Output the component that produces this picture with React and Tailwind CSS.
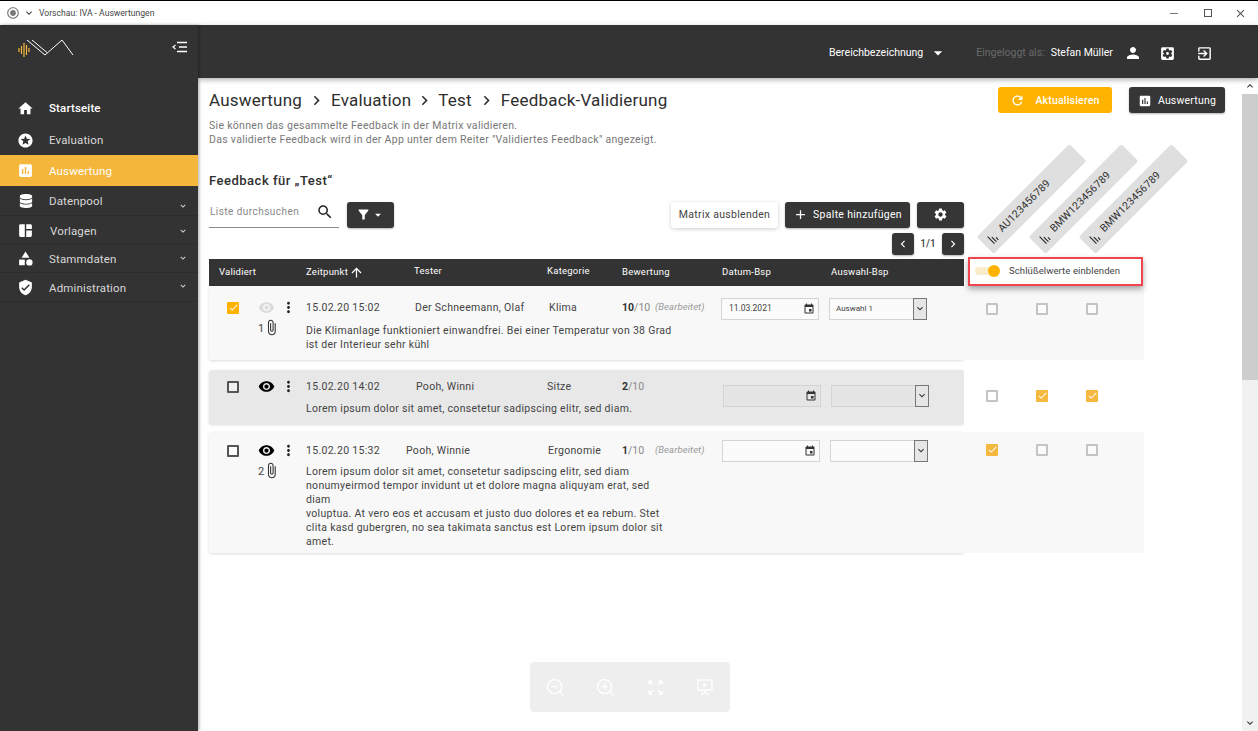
import { useState } from 'react';
import { ZoomIn, ZoomOut } from 'lucide-react';
import { FaDatabase } from 'react-icons/fa';
import {
  MdHome, MdStars, MdAssessment, MdSpaceDashboard, MdCategory, MdVerifiedUser,
  MdExpandMore, MdPerson, MdSettingsApplications, MdExitToApp, MdRefresh, MdSearch,
  MdFilterAlt, MdArrowDropDown, MdAdd, MdSettings, MdChevronLeft, MdChevronRight,
  MdArrowUpward, MdCheck, MdVisibility, MdMoreVert, MdAttachFile, MdEvent, MdKeyboardArrowUp,
  MdKeyboardArrowDown, MdZoomOutMap, MdClose, MdRadioButtonChecked, MdSort,
} from 'react-icons/md';

const navItems = [
  { label: 'Startseite', icon: MdHome, h: 'h-[32px]', text: 'text-white font-medium' },
  { label: 'Evaluation', icon: MdStars, h: 'h-[31px] pt-[1px]', text: 'text-[#d8d8d8]' },
  { label: 'Auswertung', icon: MdAssessment, h: 'h-[31px]', text: 'text-white', active: true },
  { label: 'Datenpool', icon: FaDatabase, h: 'h-[30px]', text: 'text-[#d8d8d8]', more: true, arrow: 'mt-[10px]', small: true },
  { label: 'Vorlagen', icon: MdSpaceDashboard, h: 'h-[29px] pt-[1px]', text: 'text-[#d8d8d8] pl-[1px]', more: true },
  { label: 'Stammdaten', icon: MdCategory, h: 'h-[28px]', text: 'text-[#d8d8d8]', more: true, arrow: '-mt-[2px]' },
  { label: 'Administration', icon: MdVerifiedUser, h: 'h-[29px]', text: 'text-[#d8d8d8] pt-[1px]', more: true, arrow: '-mt-[2px]' },
];

const feedback = [
  {
    id: 1, bg: 'bg-[#f8f8f8]', height: 'h-[74px]', gap: 'mb-[10px]', pt: 'pt-[15px]', shown: false, checked: true, count: '1',
    date: '15.02.20 15:02', tester: 'Der Schneemann, Olaf', testerW: 'pl-[9px] w-[143px]', cat: 'Klima', catW: 'w-[73px]',
    score: '10', edited: true, dateVal: '11.03.2021', selVal: 'Auswahl 1', inputs: 'ml-0 mt-[2px]', descMt: 'mt-[9px]',
    text: ['Die Klimanlage funktioniert einwandfrei. Bei einer Temperatur von 38 Grad', 'ist der Interieur sehr kühl'],
    matrix: [false, false, false], matrixStyle: 'pt-[17px] bg-[#f8f8f8]',
  },
  {
    id: 2, bg: 'bg-[#e8e8e8]', height: 'h-[54px]', gap: 'mb-[8px]', pt: 'pt-[10px]', shown: true, checked: false,
    date: '15.02.20 14:02', tester: 'Pooh, Winni', testerW: 'pl-[10px] w-[141px]', cat: 'Sitze', catW: 'w-[75px]',
    score: '2', edited: false, dateVal: '', selVal: '', inputs: 'ml-[2px] mt-[18px]', dark: true, descMt: 'mt-[8px]',
    text: ['Lorem ipsum dolor sit amet, consetetur sadipscing elitr, sed diam.'],
    matrix: [false, true, true], matrixStyle: 'pt-[20px] bg-white',
  },
  {
    id: 3, bg: 'bg-[#f8f8f8]', height: 'h-[121px]', gap: '', pt: 'pt-[12px]', shown: true, checked: false, count: '2',
    date: '15.02.20 15:32', tester: 'Pooh, Winnie', testerW: 'w-[142px] pl-0', cat: 'Ergonomie', catW: 'w-[74px]',
    score: '1', edited: true, dateVal: '', selVal: '', inputs: 'ml-[1px]', descMt: 'mt-[7px]',
    text: [
      'Lorem ipsum dolor sit amet, consetetur sadipscing elitr, sed diam',
      'nonumyeirmod tempor invidunt ut et dolore magna aliquyam erat, sed',
      'diam',
      'voluptua. At vero eos et accusam et justo duo dolores et ea rebum. Stet',
      'clita kasd gubergren, no sea takimata sanctus est Lorem ipsum dolor sit',
      'amet.',
    ],
    matrix: [true, false, false], matrixStyle: 'pt-[12px] bg-[#f8f8f8]',
  },
];

const matrixLabels = [
  { label: 'AU123456789', pos: 'left-[2px]' },
  { label: 'BMW123456789', pos: 'left-[54px]' },
  { label: 'BMW123456789', pos: 'left-[104px]' },
];

function Checkbox({ checked, muted }) {
  if (checked) {
    return (
      <span className={`flex h-[12px] w-[12px] items-center justify-center rounded-[1px] ${muted ? 'bg-[#f5b93f]' : 'bg-[#ffb300]'}`}>
        <MdCheck className="h-[11px] w-[11px] text-white" />
      </span>
    );
  }
  return <span className={`block h-[12px] w-[12px] rounded-[1px] border-2 bg-white/40 ${muted ? 'border-[#c4c4c4]' : 'border-[#555555]'}`} />;
}

function DarkButton({ children, className }) {
  return (
    <button className={`flex items-center justify-center rounded-[3px] bg-[#363636] text-white shadow-[0_1px_2px_rgba(0,0,0,0.3)] ${className}`}>
      {children}
    </button>
  );
}

function FeedbackRow({ row }) {
  return (
    <div className={`flex w-[755px] rounded-[3px] shadow-[0_1px_3px_rgba(0,0,0,0.14)] ${row.bg} ${row.height} ${row.gap} ${row.pt}`}>
      <div className="flex w-[97px] shrink-0 flex-col">
        <div className="flex h-[14px] items-center">
          <span className="ml-[18px]"><Checkbox checked={row.checked} /></span>
          <MdVisibility className={`ml-[19px] h-[17px] w-[17px] ${row.shown ? 'text-black' : 'text-[#dcdcdc]'}`} />
          <MdMoreVert className="ml-[5px] h-[17px] w-[17px] text-[#222222]" />
        </div>
        {row.count && (
          <div className="ml-[49px] mt-[3px] flex items-center text-[11px] text-[#444444]">
            <span className="pt-[3px]">{row.count}</span>
            <MdAttachFile className="-ml-[1px] h-[17px] w-[17px] text-[#333333]" />
          </div>
        )}
      </div>
      <div className="min-w-0 flex-1">
        <div className="flex h-[14px] items-center text-[10.5px] tracking-[0.3px] text-[#444444]">
          <span className="w-[100px] shrink-0">{row.date}</span>
          <span className={`shrink-0 ${row.testerW}`}>{row.tester}</span>
          <span className={`shrink-0 ${row.catW}`}>{row.cat}</span>
          <span className="w-[33px] shrink-0 tracking-normal text-[#888888]"><b className="font-bold text-[#333333]">{row.score}</b>/10</span>
          <span className="w-[66px] shrink-0 whitespace-nowrap text-[9.5px] italic tracking-[0.1px] text-[#9a9a9a]">{row.edited ? '(Bearbeitet)' : ''}</span>
          <div className={`flex shrink-0 items-center gap-[10px] tracking-normal ${row.inputs}`}>
            <div className={`flex h-[22px] w-[98px] items-center border border-[#d4d4d4] pl-[7px] pr-[3px] text-[8.5px] text-[#444444] ${row.dark ? 'bg-[#e5e5e5]' : 'bg-[#fbfbfb]'}`}>
              {row.dateVal}
              <MdEvent className="ml-auto h-[12px] w-[12px] text-[#333333]" />
            </div>
            <div className={`flex h-[22px] w-[98px] items-center border border-[#d4d4d4] pl-[6px] text-[8px] text-[#444444] ${row.dark ? 'bg-[#e5e5e5]' : 'bg-[#fbfbfb]'}`}>
              {row.selVal}
              <span className="-mr-[1px] ml-auto flex h-[22px] w-[14px] items-center justify-center border border-[#777777] bg-[#e6e6e6]">
                <MdKeyboardArrowDown className="h-[13px] w-[13px] text-[#333333]" />
              </span>
            </div>
          </div>
        </div>
        <div className={`whitespace-nowrap text-[10.5px] leading-[14px] tracking-[0.3px] text-[#444444] ${row.descMt}`}>
          {row.text.map((line, i) => <div key={i}>{line}</div>)}
        </div>
      </div>
    </div>
  );
}

function MatrixCells({ row }) {
  return (
    <div className={`flex ${row.height} ${row.gap} ${row.matrixStyle}`}>
      {row.matrix.map((on, i) => (
        <div key={i} className={`flex h-[12px] w-[50px] justify-center ${i === 0 ? 'ml-[3px]' : ''}`}>
          <Checkbox checked={on} muted />
        </div>
      ))}
    </div>
  );
}

export default function App() {
  const [search, setSearch] = useState('');

  return (
    <div className="flex h-[731px] w-[1258px] flex-col overflow-hidden bg-white font-['Roboto',sans-serif]">
      {/* window title bar */}
      <div className="flex h-[25px] shrink-0 items-center border-t border-black bg-white pl-[6px] text-[8.6px] text-[#444444]">
        <MdRadioButtonChecked className="h-[14px] w-[14px] text-[#777777]" />
        <MdExpandMore className="ml-[3px] h-[12px] w-[12px]" />
        <span className="ml-[4px]">Vorschau: IVA - Auswertungen</span>
        <div className="ml-auto flex items-center pr-[11px] text-[#555555]">
          <span className="block h-[1px] w-[8px] bg-[#777777]" />
          <span className="ml-[26px] block h-[8px] w-[8px] border border-[#555555]" />
          <MdClose className="ml-[22px] h-[13px] w-[13px]" />
        </div>
      </div>

      <div className="flex min-h-0 flex-1">
        {/* sidebar */}
        <aside className="relative z-20 w-[198px] shrink-0 bg-[#333333] shadow-[1px_0_3px_rgba(0,0,0,0.35)]">
          <div className="flex h-[67px] items-start justify-between pl-[17px] pr-[11px] pt-[14px]">
            <svg width="58" height="19" viewBox="0 0 58 19" fill="none">
              <path d="M2 9v4M4.5 7v8M7 4v14M9.5 6v10M12 9v4" stroke="#f5b93f" strokeWidth="1.2" />
              <path d="M10 1l18 15L45 1l11 15M15 1l15 12.5" stroke="#ffffff" strokeWidth="1" />
            </svg>
            <svg width="15" height="12" viewBox="0 0 15 12" className="mt-[2px]" fill="none" stroke="#ffffff">
              <path d="M5 1.5h10M7 6h8M5 10.5h10" strokeWidth="1.6" />
              <path d="M3.5 4L1 6l2.5 2" strokeWidth="1.2" />
            </svg>
          </div>
          <nav>
            {navItems.map((item) => (
              <div key={item.label} className={`flex items-center pl-[17px] ${item.h} ${item.active ? 'bg-[#f5b63c]' : ''} ${item.more ? 'border-b border-[#2d2d2d]' : ''}`}>
                <span className="flex w-[17px] shrink-0 justify-center">
                  <item.icon className={`text-white ${item.small ? 'h-[14px] w-[14px]' : 'h-[17px] w-[17px]'}`} />
                </span>
                <span className={`ml-[15px] mt-[2px] text-[11.5px] tracking-[0.15px] ${item.text}`}>{item.label}</span>
                {item.more && <MdExpandMore className={`ml-auto mr-[10px] h-[10px] w-[10px] text-[#dddddd] ${item.arrow || ''}`} />}
              </div>
            ))}
          </nav>
        </aside>

        <div className="flex min-w-0 flex-1 flex-col">
          {/* top header */}
          <header className="relative z-10 flex h-[53px] shrink-0 items-center bg-[#333333] pl-[631px] pt-[3px] text-[10.5px] shadow-[0_2px_5px_rgba(0,0,0,0.3)]">
            <span className="text-white">Bereichbezeichnung</span>
            <MdArrowDropDown className="ml-[5px] h-[20px] w-[20px] text-white" />
            <span className="ml-[28px] text-[#6a6a6a]">Eingeloggt als:</span>
            <span className="ml-[6px] text-white">Stefan Müller</span>
            <MdPerson className="ml-[11px] h-[18px] w-[18px] text-white" />
            <MdSettingsApplications className="ml-[17px] h-[17px] w-[17px] text-white" />
            <MdExitToApp className="ml-[20px] h-[17px] w-[17px] text-white" />
          </header>

          <div className="flex min-h-0 flex-1">
            {/* main scroll area */}
            <main className="relative min-w-0 flex-1 pl-[11px]">
              <div className="flex h-[41px] items-start justify-between pt-[9px] pr-[17px]">
                <div className="flex items-center pt-[1px] text-[17px] tracking-[0.2px] text-[#2e2e2e]">
                  <span>Auswertung</span>
                  <MdChevronRight className="mx-[5px] h-[19px] w-[19px]" />
                  <span>Evaluation</span>
                  <MdChevronRight className="mx-[4px] h-[19px] w-[19px]" />
                  <span>Test</span>
                  <MdChevronRight className="mx-[5px] h-[19px] w-[19px]" />
                  <span>Feedback-Validierung</span>
                </div>
                <div className="flex gap-[17px]">
                  <button className="flex h-[26px] w-[114px] items-center justify-center gap-[10px] rounded-[3px] bg-[#ffb300] pt-[1px] text-[10.5px] font-medium tracking-[0.2px] text-white">
                    <MdRefresh className="h-[15px] w-[15px]" />
                    Aktualisieren
                  </button>
                  <DarkButton className="h-[26px] w-[96px] gap-[6px] pt-[1px] text-[10.5px] tracking-[0.2px]">
                    <MdAssessment className="h-[14px] w-[14px]" />
                    Auswertung
                  </DarkButton>
                </div>
              </div>

              <p className="text-[10.5px] leading-[14px] tracking-[0.3px] text-[#777777]">
                Sie können das gesammelte Feedback in der Matrix validieren.<br />
                Das validierte Feedback wird in der App unter dem Reiter "Validiertes Feedback" angezeigt.
              </p>

              <h2 className="mt-[24px] text-[13px] font-medium tracking-[0.5px] text-[#2e2e2e]">Feedback für „Test“</h2>

              <div className="mt-[11px] flex w-[755px]">
                <div className="flex h-[26px] w-[130px] items-center justify-between border-b border-[#8a8a8a] pb-[5px]">
                  <input
                    value={search}
                    onChange={(e) => setSearch(e.target.value)}
                    placeholder="Liste durchsuchen"
                    className="ml-[1px] w-[100px] bg-transparent text-[10px] tracking-[0.45px] outline-none placeholder:text-[#888888]"
                  />
                  <MdSearch className="mr-[5px] h-[18px] w-[18px] text-[#222222]" />
                </div>
                <DarkButton className="ml-[8px] h-[26px] w-[47px]">
                  <MdFilterAlt className="h-[15px] w-[15px]" />
                  <MdArrowDropDown className="h-[14px] w-[14px]" />
                </DarkButton>
                <div className="ml-auto flex flex-col items-end">
                  <div className="flex gap-[7px]">
                    <button className="h-[26px] w-[107px] rounded-[3px] bg-white text-[10.5px] tracking-[0.3px] text-[#444444] shadow-[0_1px_4px_rgba(0,0,0,0.2)]">
                      Matrix ausblenden
                    </button>
                    <DarkButton className="h-[26px] w-[125px] gap-[5px] text-[10.5px] tracking-[0.3px]">
                      <MdAdd className="h-[15px] w-[15px]" />
                      Spalte hinzufügen
                    </DarkButton>
                    <DarkButton className="h-[26px] w-[47px]">
                      <MdSettings className="h-[15px] w-[15px]" />
                    </DarkButton>
                  </div>
                  <div className="mt-[5px] flex h-[22px] items-center">
                    <DarkButton className="h-[22px] w-[22px]"><MdChevronLeft className="h-[14px] w-[14px]" /></DarkButton>
                    <span className="w-[28px] text-center text-[10px] font-medium text-[#444444]">1/1</span>
                    <DarkButton className="h-[22px] w-[22px]"><MdChevronRight className="h-[14px] w-[14px]" /></DarkButton>
                  </div>
                </div>
              </div>

              {/* table plus matrix */}
              <div className="mt-[4px] flex">
                <div className="w-[755px]">
                  <div className="flex h-[27px] items-center bg-[#333333] text-[9.5px] tracking-[0.25px] text-white">
                    <span className="w-[97px] pl-[10px] pt-[1px]">Validiert</span>
                    <span className="flex w-[108px] items-center pt-[1px]">
                      Zeitpunkt
                      <MdArrowUpward className="ml-[1px] h-[15px] w-[15px]" />
                    </span>
                    <span className="w-[133px] pb-[2px]">Tester</span>
                    <span className="w-[75px] pb-[2px]">Kategorie</span>
                    <span className="w-[100px]">Bewertung</span>
                    <span className="w-[109px]">Datum-Bsp</span>
                    <span>Auswahl-Bsp</span>
                  </div>
                  {feedback.map((row) => <FeedbackRow key={row.id} row={row} />)}
                </div>

                <div className="relative w-[180px]">
                  <div className="relative z-10 -mt-[2px] ml-[4px] flex h-[29px] w-[175px] items-center border-[2.5px] border-[#f2444e] bg-white pl-[5px] text-[9.5px] tracking-[0.1px] text-[#444444] shadow-[0_3px_6px_rgba(0,0,0,0.35)]">
                    <span className="relative block h-[8px] w-[24px] rounded-full bg-[#f9eccb]">
                      <span className="absolute left-[13px] top-[-2px] h-[12px] w-[12px] rounded-full bg-[#ffb300]" />
                    </span>
                    <span className="ml-[10px]">Schlüßelwerte einblenden</span>
                  </div>
                  {matrixLabels.map((m, i) => (
                    <div
                      key={i}
                      className={`absolute top-[-72px] flex h-[24px] w-[131px] origin-center -rotate-45 items-center rounded-[2px] bg-[#dfdfdf] pl-[4px] text-[10.5px] tracking-[0.2px] text-[#333333] ${m.pos}`}
                    >
                      <MdSort className="mr-[4px] h-[13px] w-[13px] shrink-0 -rotate-90 text-[#222222]" />
                      {m.label}
                    </div>
                  ))}
                  {feedback.map((row) => <MatrixCells key={row.id} row={row} />)}
                </div>
              </div>

              {/* zoom toolbar */}
              <div className="absolute bottom-[19px] left-[332px] grid h-[50px] w-[200px] grid-cols-4 place-items-center rounded-[4px] bg-[#eeeeee] text-white">
                <ZoomOut size={21} strokeWidth={1.5} />
                <ZoomIn size={21} strokeWidth={1.5} />
                <MdZoomOutMap className="h-[19px] w-[19px]" />
                <svg width="18" height="18" viewBox="0 0 18 18" fill="none" stroke="currentColor" strokeWidth="1.3">
                  <rect x="2" y="2" width="14" height="10" />
                  <path d="M7.5 4.5l3.5 2.5-3.5 2.5z" fill="currentColor" stroke="none" />
                  <path d="M9 12v2M9 14l-4 3M9 14l4 3" />
                </svg>
              </div>
            </main>

            {/* scrollbar */}
            <div className="flex w-[16px] shrink-0 flex-col bg-[#f1f1f1]">
              <div className="flex h-[16px] items-center justify-center bg-white">
                <MdKeyboardArrowUp className="h-[12px] w-[12px] text-[#333333]" />
              </div>
              <div className="h-[286px] bg-[#cdcdcd]" />
              <div className="flex-1" />
              <div className="flex h-[16px] items-center justify-center">
                <MdKeyboardArrowDown className="h-[12px] w-[12px] text-[#333333]" />
              </div>
            </div>
          </div>
        </div>
      </div>
    </div>
  );
}
